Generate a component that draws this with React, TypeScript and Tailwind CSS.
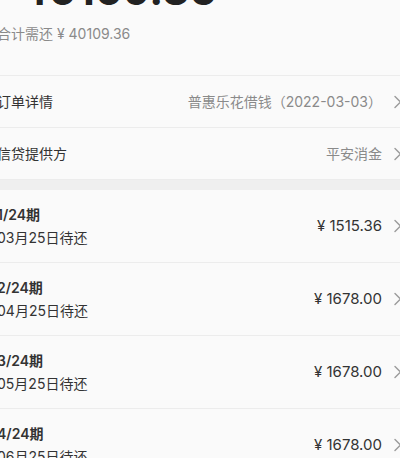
const font = { fontFamily: '"Inter", "Noto Sans CJK SC", sans-serif' }

interface Installment {
  period: string
  due: string
  amount: string
}

const installments: Installment[] = [
  { period: '1/24期', due: '03月25日待还', amount: '1515.36' },
  { period: '2/24期', due: '04月25日待还', amount: '1678.00' },
  { period: '3/24期', due: '05月25日待还', amount: '1678.00' },
  { period: '4/24期', due: '06月25日待还', amount: '1678.00' },
]

function Chevron() {
  return (
    <svg width="8" height="14" viewBox="0 0 8 14" fill="none" className="shrink-0">
      <path d="M1 1.5L6.5 7L1 12.5" stroke="#9a9a9a" strokeWidth="1.4" strokeLinecap="round" strokeLinejoin="round" />
    </svg>
  )
}

function InfoRow({ label, value }: { label: string; value: string }) {
  return (
    <div className="flex h-[52px] items-center justify-between border-b border-[#ececec] pr-[7px]">
      <span className="text-[14px] text-[#333]">{label}</span>
      <div className="flex items-center gap-3">
        <span className="text-[14px] text-[#8a8a8a]">{value}</span>
        <Chevron />
      </div>
    </div>
  )
}

export default function App() {
  return (
    <div className="h-[458px] w-[400px] overflow-hidden bg-[#fafafa]" style={font}>
      <div className="-ml-[3px] w-[412px]">
        <div className="flex h-[76px] flex-col border-b border-[#ececec]">
          <div className="-mt-[32px] ml-[23px] text-[42px] font-bold leading-[44px] text-[#222]">40109.36</div>
          <div className="mt-[12px] text-[14px] leading-[20px] text-[#8a8a8a]">合计需还 ¥ 40109.36</div>
        </div>

        <InfoRow label="订单详情" value="普惠乐花借钱（2022-03-03）" />
        <InfoRow label="信贷提供方" value="平安消金" />

        <div className="h-[10px] bg-[#efefef]" />

        {installments.map((item) => (
          <div
            key={item.period}
            className="flex h-[73px] items-center justify-between border-b border-[#ececec] pr-[7px]"
          >
            <div className="flex flex-col gap-[5px]">
              <span className="text-[14px] font-semibold leading-[18px] text-[#333]">{item.period}</span>
              <span className="text-[14px] leading-[18px] text-[#333]">{item.due}</span>
            </div>
            <div className="flex items-center gap-3">
              <span className="text-[15px] text-[#333]">¥ {item.amount}</span>
              <Chevron />
            </div>
          </div>
        ))}
      </div>
    </div>
  )
}
